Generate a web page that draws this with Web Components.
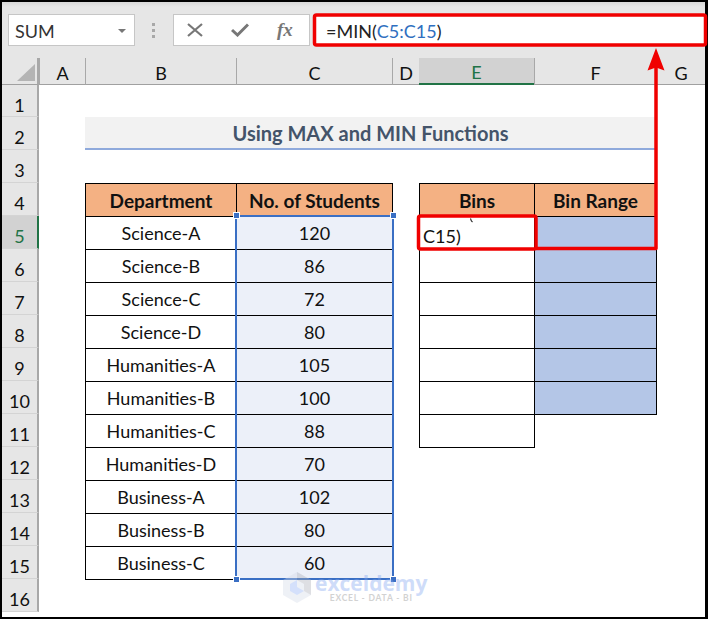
<!DOCTYPE html>
<html>
<head>
<meta charset="utf-8">
<title>Using MAX and MIN Functions</title>
<style>
    html, body { margin: 0; padding: 0; background: #000; }
</style>
</head>
<body>
<xl-window>
    <xl-formula-bar slot="bar" name="SUM"><span style="color:#222">=MIN(</span><span style="color:#2f6fc0">C5:C15</span><span style="color:#222">)</span></xl-formula-bar>
    <xl-sheet slot="sheet"></xl-sheet>
</xl-window>

<script>
(() => {
    // window frame: black edge, formula bar on top, sheet below, drawn notes over both
    const windowTmpl = document.createElement('template')
    windowTmpl.innerHTML = `
        <style>
            :host {
                display: flex;
                flex-direction: column;
                position: relative;
                box-sizing: border-box;
                width: 708px;
                height: 619px;
                padding: 2px 3px 2px 2px;
                background: #000;
                overflow: hidden;
                font-family: 'Lato', 'Noto Sans', sans-serif;
            }
            svg {
                position: absolute;
                left: 0;
                top: 0;
                pointer-events: none;
            }
        </style>
        <slot name="bar"></slot>
        <slot name="sheet"></slot>
        <svg width="708" height="619" viewBox="0 0 708 619" fill="none">
            <rect x="314.500" y="15" width="391" height="30" rx="2" stroke="#f00000" stroke-width="3.500"/>
            <rect x="418.500" y="216" width="117.500" height="33" rx="2" stroke="#f00000" stroke-width="3.500"/>
            <path d="M536 248.500H656V66" stroke="#f00000" stroke-width="3.500" stroke-linejoin="round"/>
            <path d="M656 48L664.500 70.500L656 67.500L647.500 70.500Z" fill="#f00000"/>
            <path d="M470.500 218.500Q471 221 472.500 222" stroke="#222" stroke-width="1.200"/>
        </svg>
    `

    class XlWindow extends HTMLElement {
        constructor () {
            super()
            this.attachShadow({ mode: 'open' })
            this.shadowRoot.appendChild(windowTmpl.content.cloneNode(true))
        }
    }

    const barTmpl = document.createElement('template')
    barTmpl.innerHTML = `
        <style>
            :host {
                display: flex;
                flex: 0 0 56px;
                align-items: center;
                box-sizing: border-box;
                padding: 0 0 0 6px;
                background: linear-gradient(#d8d8d8 0, #e6e6e6 5px);
                color: #222;
            }
            .box {
                display: flex;
                align-items: center;
                box-sizing: border-box;
                height: 32px;
                background: #fff;
                border: 1px solid #c6c6c6;
            }
            .name {
                width: 127px;
                padding: 2px 6px 0;
                justify-content: space-between;
                font-size: 18px;
                color: #333;
            }
            .caret {
                width: 0;
                height: 0;
                margin-right: 2px;
                border: 4px solid transparent;
                border-top: 4px solid #777;
                border-bottom: 0;
            }
            .dots {
                display: flex;
                flex-direction: column;
                gap: 3px;
                margin: 0 18px 0 17px;
            }
            .dots i {
                width: 3px;
                height: 3px;
                background: #a8a8a8;
            }
            .btns {
                width: 137px;
                gap: 28px;
                padding: 0 0 0 13px;
            }
            .fx {
                font: italic bold 19px 'Liberation Serif', serif;
                color: #777;
            }
            .input {
                flex: 1;
                margin-left: 5px;
                padding: 2px 11px 0;
                border: 0;
                font-size: 18px;
            }
        </style>
        <div class="box name"><span class="label"></span><span class="caret"></span></div>
        <div class="dots"><i></i><i></i><i></i></div>
        <div class="box btns">
            <svg width="16" height="14" viewBox="0 0 16 14" fill="none" stroke="#777" stroke-width="2.200"><path d="M1 1L15 13M15 1L1 13"/></svg>
            <svg width="18" height="14" viewBox="0 0 18 14" fill="none" stroke="#777" stroke-width="3"><path d="M1 7L6.500 12L17 1.500"/></svg>
            <span class="fx">fx</span>
        </div>
        <div class="box input"><slot></slot></div>
    `

    class XlFormulaBar extends HTMLElement {
        constructor () {
            super()
            this.attachShadow({ mode: 'open' })
            this.shadowRoot.appendChild(barTmpl.content.cloneNode(true))
        }

        connectedCallback() {
            this.shadowRoot.querySelector('.label').textContent = this.getAttribute('name')
        }
    }

    const sheetTmpl = document.createElement('template')
    sheetTmpl.innerHTML = `
        <style>
            :host {
                display: grid;
                position: relative;
                flex: 1;
                grid-template-columns: 37px 46px 151px 156px 27px 115px 122px 49px;
                grid-template-rows: 27px 32px repeat(15, 33px) 1fr;
                background: #fff;
                color: #111;
                font-size: 18px;
            }
            .head {
                display: flex;
                align-items: center;
                justify-content: center;
                box-sizing: border-box;
                background: #e6e6e6;
                color: #111;
            }
            .col {
                border-left: 1px solid #a8a8a8;
                border-bottom: 1px solid #a0a0a0;
                padding-top: 3px;
            }
            .row {
                grid-column: 1;
                padding-top: 8px;
                border-right: 2px solid #a8a8a8;
                border-bottom: 1px solid #d4d4d4;
            }
            .corner {
                grid-column: 1;
                grid-row: 1;
                display: block;
                border-right: 2px solid #a8a8a8;
                border-bottom: 1px solid #a0a0a0;
            }
            .corner svg { display: block; }
            .on { background: #d2d2d2; color: #217346; }
            .col.on { border-left: 0; border-bottom: 2px solid #217346; }
            .row.on { border-right: 2px solid #217346; }
            .title {
                grid-column: 3 / 8;
                grid-row: 3;
                display: flex;
                align-items: center;
                justify-content: center;
                box-sizing: border-box;
                padding-top: 1px;
                background: #f2f2f2;
                border-bottom: 2px solid #8faadc;
                color: #44546a;
                font-weight: 700;
                font-size: 20px;
            }
            .cell {
                display: flex;
                align-items: center;
                justify-content: center;
                box-sizing: border-box;
                margin: 0 -1px -1px 0;
                border: 1px solid #000;
                overflow: hidden;
            }
            .th { background: #f4b183; font-weight: 700; font-size: 19px; }
            .num { background: #ecf0f9; }
            .range { background: #b4c6e7; }
            .wrap {
                justify-content: flex-start;
                align-items: flex-end;
                padding: 0 0 0 3px;
                line-height: 26px;
            }
            .sel {
                grid-column: 4;
                grid-row: 6 / 17;
                position: relative;
                box-sizing: border-box;
                margin: -1px -2px -1px -1px;
                border: 2.500px solid #3a6fc4;
                pointer-events: none;
            }
            .sel i {
                position: absolute;
                width: 5px;
                height: 5px;
                background: #3a6fc4;
                border: 1px solid #fff;
            }
            .tl { left: -4px; top: -5px; }
            .tr { right: -5px; top: -5px; }
            .bl { left: -4px; bottom: -5px; }
            .br { right: -5px; bottom: -5px; }
            .mark {
                position: absolute;
                left: 281px;
                top: 514px;
                display: flex;
                gap: 4px;
                opacity: .38;
                pointer-events: none;
            }
            .mark b {
                display: block;
                padding-top: 3px;
                font: 700 21px/17px 'Open Sans', sans-serif;
                color: #7fa4f0;
            }
            .mark small {
                display: block;
                margin-top: 1px;
                font: 700 8.500px/10px 'Lato', sans-serif;
                letter-spacing: .8px;
                color: #8a8a8a;
                text-align: center;
            }
        </style>
    `

    const columns = ['A', 'B', 'C', 'D', 'E', 'F', 'G']
    const students = [
        ['Science-A', 120], ['Science-B', 86], ['Science-C', 72], ['Science-D', 80],
        ['Humanities-A', 105], ['Humanities-B', 100], ['Humanities-C', 88], ['Humanities-D', 70],
        ['Business-A', 102], ['Business-B', 80], ['Business-C', 60]
    ]

    class XlSheet extends HTMLElement {
        constructor () {
            super()
            this.attachShadow({ mode: 'open' })
            this.shadowRoot.appendChild(sheetTmpl.content.cloneNode(true))
        }

        // col and row are the sheet's own numbers, A = 1 and row 1 = 1
        addCell(col, row, cls, html) {
            const cell = document.createElement('div')
            cell.className = cls
            cell.style.gridColumn = col + 1
            cell.style.gridRow = row + 1
            cell.innerHTML = html === undefined ? '' : html
            this.shadowRoot.appendChild(cell)
        }

        connectedCallback() {
            const root = this.shadowRoot
            const corner = document.createElement('div')
            corner.className = 'head corner'
            corner.innerHTML = '<svg width="35" height="26" viewBox="0 0 35 26"><path d="M33 6V23H15Z" fill="#b4b4b4"/></svg>'
            root.appendChild(corner)

            columns.forEach((name, i) => {
                this.addCell(i + 1, 0, 'head col' + (name === 'E' ? ' on' : ''), name)
            })
            for (let r = 1; r <= 16; r++) {
                this.addCell(0, r, 'head row' + (r === 5 ? ' on' : ''), r)
            }

            const title = document.createElement('div')
            title.className = 'title'
            title.textContent = 'Using MAX and MIN Functions'
            root.appendChild(title)

            this.addCell(2, 4, 'cell th', 'Department')
            this.addCell(3, 4, 'cell th', 'No. of Students')
            this.addCell(5, 4, 'cell th', 'Bins')
            this.addCell(6, 4, 'cell th', 'Bin Range')

            students.forEach(([dept, count], i) => {
                this.addCell(2, 5 + i, 'cell', dept)
                this.addCell(3, 5 + i, 'cell num', count)
            })

            this.addCell(5, 5, 'cell wrap', 'C15)')
            for (let r = 6; r <= 11; r++) this.addCell(5, r, 'cell')
            for (let r = 5; r <= 10; r++) this.addCell(6, r, 'cell range')

            const sel = document.createElement('div')
            sel.className = 'sel'
            sel.innerHTML = '<i class="tl"></i><i class="tr"></i><i class="bl"></i><i class="br"></i>'
            root.appendChild(sel)

            const mark = document.createElement('div')
            mark.className = 'mark'
            mark.innerHTML = `
                <svg width="28" height="31" viewBox="0 0 28 31">
                    <path d="M14 0L28 8V23L14 31L0 23V8Z" fill="#d5dbe8"/>
                    <path d="M14 0L28 8V23L21 19V12L14 8Z" fill="#a9aeb8"/>
                    <path d="M14 8L7 12V19L14 23L21 19L14 15Z" fill="#8fb0f5"/>
                </svg>
                <div><b>exceldemy</b><small>EXCEL - DATA - BI</small></div>
            `
            root.appendChild(mark)
        }
    }

    window.customElements.define('xl-window', XlWindow)
    window.customElements.define('xl-formula-bar', XlFormulaBar)
    window.customElements.define('xl-sheet', XlSheet)
})()
</script>
</body>
</html>
